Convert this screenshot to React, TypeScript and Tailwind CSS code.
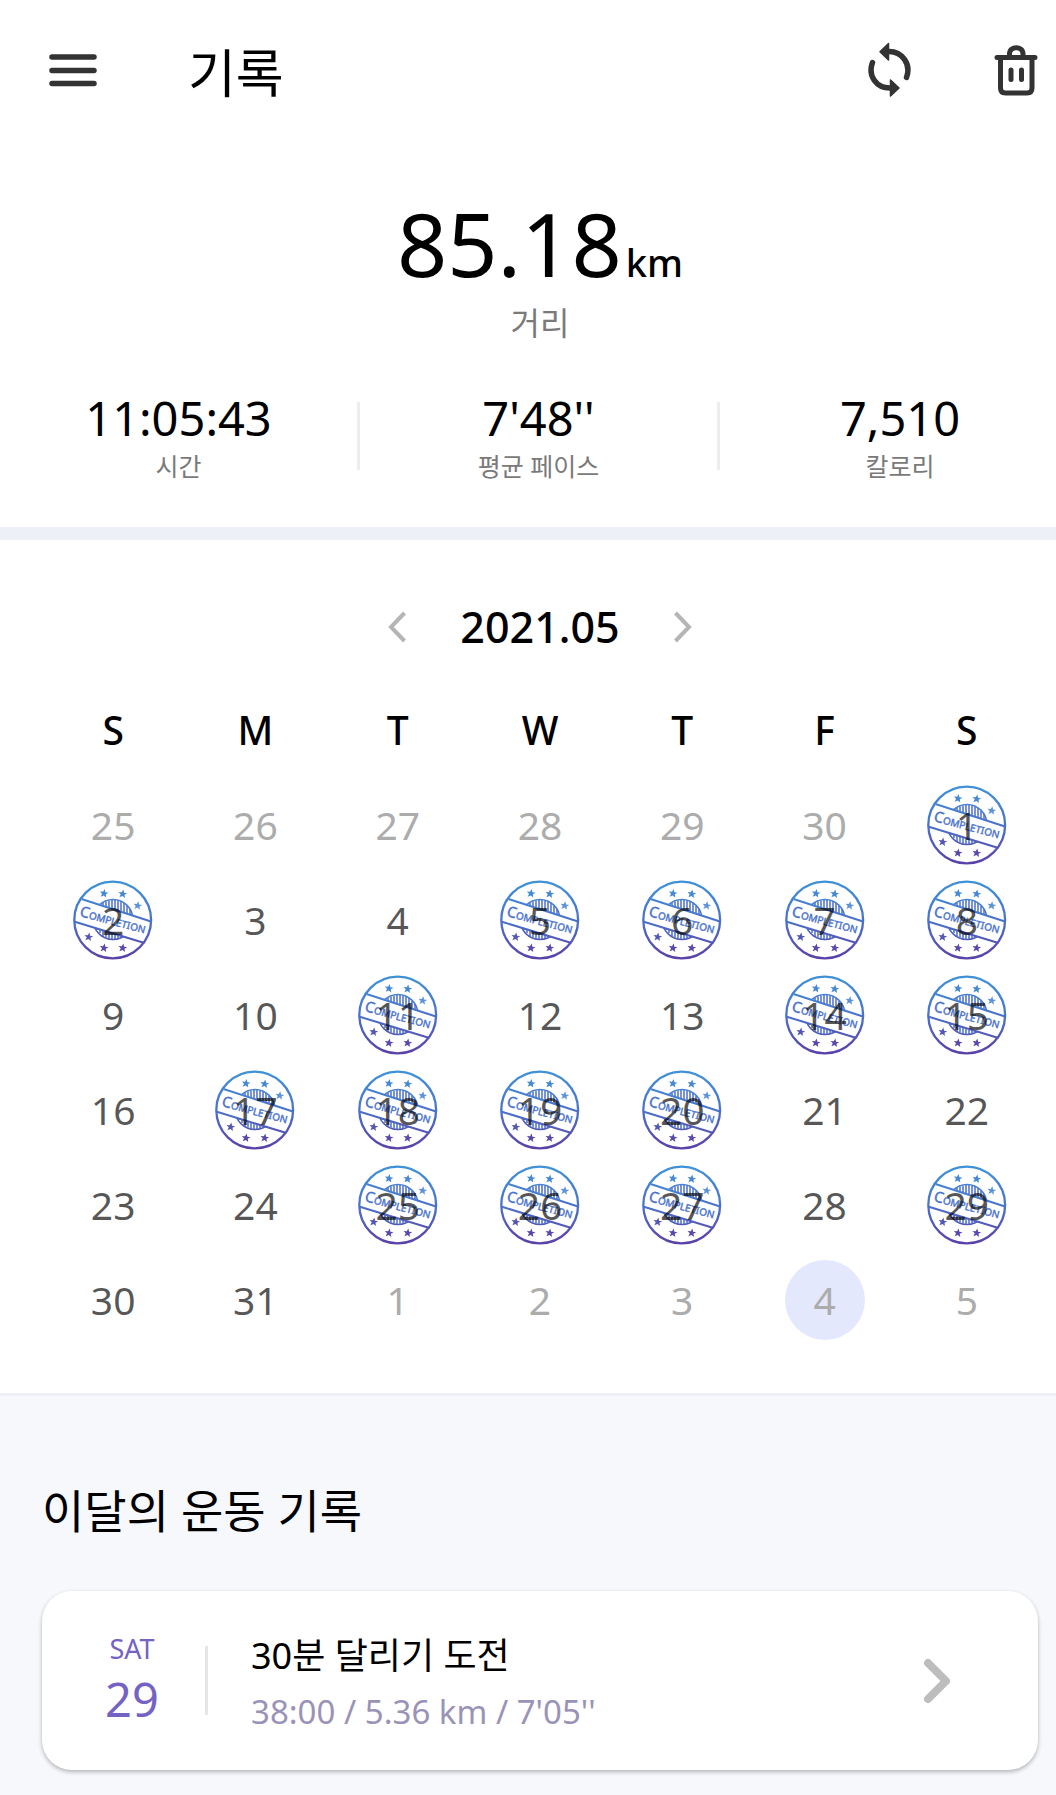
type Day = { n: number; out?: boolean; done?: boolean; today?: boolean };

const COMPLETED = new Set([1, 2, 5, 6, 7, 8, 11, 14, 15, 17, 18, 19, 20, 25, 26, 27, 29]);

const DAYS: Day[] = [
  ...[25, 26, 27, 28, 29, 30].map((n) => ({ n, out: true })),
  ...Array.from({ length: 31 }, (_, i) => ({ n: i + 1, done: COMPLETED.has(i + 1) })),
  ...[1, 2, 3, 4, 5].map((n) => ({ n, out: true, today: n === 4 })),
];

const WEEKS: Day[][] = Array.from({ length: 6 }, (_, w) => DAYS.slice(w * 7, w * 7 + 7));

const WEEKDAYS = [
  { short: "S", full: "Sunday" },
  { short: "M", full: "Monday" },
  { short: "T", full: "Tuesday" },
  { short: "W", full: "Wednesday" },
  { short: "T", full: "Thursday" },
  { short: "F", full: "Friday" },
  { short: "S", full: "Saturday" },
];

const STATS = [
  { value: "11:05:43", label: "시간" },
  { value: "7'48''", label: "평균 페이스" },
  { value: "7,510", label: "칼로리" },
];

const STARS = [
  { x: 31, y: 13.5, color: "#4488d6" },
  { x: 49.7, y: 14, color: "#4488d6" },
  { x: 64.7, y: 25.7, color: "#5c93da" },
  { x: 15.7, y: 57, color: "#5457b6" },
  { x: 31, y: 68, color: "#5849ae" },
  { x: 49.7, y: 68, color: "#5849ae" },
];

const STAR_PATH = "M0-4.600 1.200-1.500 4.400-1.400 1.900.6 2.800 3.700 0 1.900-2.800 3.700-1.900.6-4.400-1.400-1.200-1.500Z";

function StampDefs() {
  return (
    <svg className="absolute h-0 w-0" aria-hidden="true">
      <defs>
        <linearGradient id="ink" gradientUnits="userSpaceOnUse" x1="40" y1="0" x2="40" y2="80">
          <stop offset="0" stopColor="#3f93d8" />
          <stop offset="0.5" stopColor="#4a72cc" />
          <stop offset="1" stopColor="#5b3fa6" />
        </linearGradient>
        <clipPath id="above">
          <path d="M0-4H80V42.2L0 16.5Z" />
        </clipPath>
        <clipPath id="below">
          <path d="M0 41.5 80 65.5V84H0Z" />
        </clipPath>
        <g id="seal">
          <circle cx="40" cy="39.5" r="20" fill="none" stroke="url(#ink)" strokeWidth="1.5" />
          <path
            d="M24 29V50M27 26V53M30 23V56M33 21.500V57.500M36 20.500V58.500M39 20V59M42 20V59M45 20.500V58.500M48 21.500V57.500M51 23V56M54 26V53M57 29V50"
            fill="none"
            stroke="#4d6fca"
            strokeWidth="1.5"
          />
        </g>
      </defs>
    </svg>
  );
}

function Stamp() {
  return (
    <svg viewBox="0 0 80 80" className="absolute inset-0 size-20" aria-hidden="true">
      <circle cx="39.7" cy="40" r="38.4" fill="none" stroke="url(#ink)" strokeWidth="2.300" />
      <g clipPath="url(#above)">
        <use href="#seal" />
      </g>
      <g clipPath="url(#below)">
        <use href="#seal" />
      </g>
      <path d="M8.500 19 78 41.500M1 41.500 71.500 63" stroke="url(#ink)" strokeWidth="2" fill="none" />
      {STARS.map((s) => (
        <path key={`${s.x}-${s.y}`} d={STAR_PATH} fill={s.color} transform={`translate(${s.x} ${s.y}) rotate(8)`} />
      ))}
      <text
        transform="translate(6 36) rotate(15)"
        fill="#4a72cc"
        stroke="#4a72cc"
        strokeWidth="0.4"
        fontSize="10"
        fontFamily="'Noto Sans', sans-serif"
      >
        <tspan fontSize="15">C</tspan>OMPLETION
      </text>
    </svg>
  );
}

function DayCell({ day }: { day: Day }) {
  return (
    <td className="h-[95px] p-0">
      <button
        type="button"
        className={`relative mx-auto flex size-20 items-center justify-center rounded-full text-[39px] leading-none ${
          day.today ? "bg-[#e4e8fc]" : ""
        } ${day.out ? "text-[#acacac]" : "text-black/67"}`}
      >
        {day.done && <Stamp />}
        <span className="relative">{day.n}</span>
      </button>
    </td>
  );
}

export default function App() {
  return (
    <div className="min-h-screen overflow-x-hidden bg-[#f6f8fc] font-['Noto_Sans','Noto_Sans_CJK_KR',sans-serif] text-black">
      <StampDefs />
      <div className="border-b-[3px] border-[#edf0f7] bg-white">
        <header className="flex h-[140px] items-center pr-[18px] pl-[49px]">
          <button type="button" aria-label="메뉴">
            <svg viewBox="0 0 48 34" className="h-[34px] w-12" fill="none" stroke="#333" strokeWidth="5.500" strokeLinecap="round">
              <path d="M3 4H45M3 17.500H45M3 30.500H45" />
            </svg>
          </button>
          <h1 className="ml-[91px] pt-1.5 text-[52px] leading-[60px]">기록</h1>
          <button type="button" aria-label="동기화" className="ml-auto">
            <svg viewBox="0 0 44 56" className="h-14 w-11" fill="none" stroke="#333" strokeWidth="5.500" strokeLinecap="round">
              <path d="M4.500 20.500C-0.500 34 8.500 46 22 46M21 9.500C34 9.500 43.500 22 38.500 35.500" />
              <path d="M20.500 1.500V18L12 9.800ZM22.500 38V54L31 46Z" fill="#333" strokeWidth="1.500" strokeLinejoin="round" />
            </svg>
          </button>
          <button type="button" aria-label="삭제" className="ml-[82px]">
            <svg viewBox="0 0 44 52" className="h-[52px] w-11" fill="none" stroke="#333" strokeWidth="5" strokeLinecap="round" strokeLinejoin="round">
              <path d="M3 13.500H41M6.500 14V44Q6.500 49 11.500 49H33Q38 49 38 44V14M15.500 12V10C15.500 1.500 29 1.500 29 10V12M17 26V35.500M27.500 26V35.500" />
            </svg>
          </button>
        </header>

        <section className="flex flex-col items-center pt-[65px] pl-6">
          <p className="flex items-baseline gap-1 text-[88px] leading-[76px]">
            85.18
            <span className="text-[38px] font-medium">km</span>
          </p>
          <p className="text-[32px] leading-[46px] text-[#7a7a7a]">거리</p>
        </section>

        <section className="grid grid-cols-[15fr_15fr_14fr] pt-[42px] pb-[43px] text-center">
          {STATS.map((s, i) => (
            <div key={s.label} className={`flex items-center ${i === 2 ? "pl-6" : ""}`}>
              <div className="flex-1">
                <p className="text-[47px] leading-[60px]">{s.value}</p>
                <p className="text-[25px] leading-9 text-[#7a7a7a]">{s.label}</p>
              </div>
              {i < 2 && <div className="h-[68px] w-[3px] bg-[#ededed]" />}
            </div>
          ))}
        </section>

        <div className="h-[13px] bg-[#edf0f7]" />

        <section className="pr-[18px] pb-[46px] pl-[42px]">
          <div className="flex items-center justify-center gap-[54px] pt-[57px]">
            <button type="button" aria-label="이전 달">
              <svg viewBox="0 0 18 32" className="h-8 w-[18px]" fill="none" stroke="#b5b5b5" strokeWidth="4">
                <path d="M16.500 2 3 16 16.500 30" />
              </svg>
            </button>
            <h2 className="text-[43px] leading-[60px] font-medium">2021.05</h2>
            <button type="button" aria-label="다음 달">
              <svg viewBox="0 0 18 32" className="h-8 w-[18px]" fill="none" stroke="#b5b5b5" strokeWidth="4">
                <path d="M1.500 2 15 16 1.500 30" />
              </svg>
            </button>
          </div>

          <table className="mt-[49px] w-full table-fixed border-collapse">
            <thead>
              <tr>
                {WEEKDAYS.map((d) => (
                  <th key={d.full} scope="col" abbr={d.full} className="h-[71px] p-0 pb-[23px] text-[39px] leading-[48px] font-medium">
                    {d.short}
                  </th>
                ))}
              </tr>
            </thead>
            <tbody>
              {WEEKS.map((week, w) => (
                <tr key={w}>
                  {week.map((day, i) => (
                    <DayCell key={i} day={day} />
                  ))}
                </tr>
              ))}
            </tbody>
          </table>
        </section>
      </div>

      <section className="pt-[80px] pr-[18px] pb-6 pl-[42px]">
        <h2 className="text-[46px] leading-[68px]">이달의 운동 기록</h2>
        <a href="#record-29" className="mt-[47px] flex h-[179px] items-center rounded-[30px] bg-white pr-[87px] pl-[62px] shadow-[0_2px_4px_rgba(0,0,0,0.28)]">
          <div className="w-[56px] text-center text-[#7463c2]">
            <p className="text-[27px] leading-9">SAT</p>
            <p className="text-[47px] leading-[64px]">29</p>
          </div>
          <div className="ml-[45px] h-[69px] w-[3px] bg-[#e6e6e6]" />
          <div className="ml-[43px] flex-1 pt-1.5">
            <p className="text-[36px] leading-[56px]">30분 달리기 도전</p>
            <p className="text-[33px] leading-[56px] text-[#9a93b8]">38:00 / 5.36 km / 7'05''</p>
          </div>
          <svg viewBox="0 0 28 46" className="h-[46px] w-7" fill="none" stroke="#bdbdbd" strokeWidth="8" strokeLinecap="round" strokeLinejoin="round" aria-hidden="true">
            <path d="M5 5 23 23 5 41" />
          </svg>
        </a>
      </section>
    </div>
  );
}
